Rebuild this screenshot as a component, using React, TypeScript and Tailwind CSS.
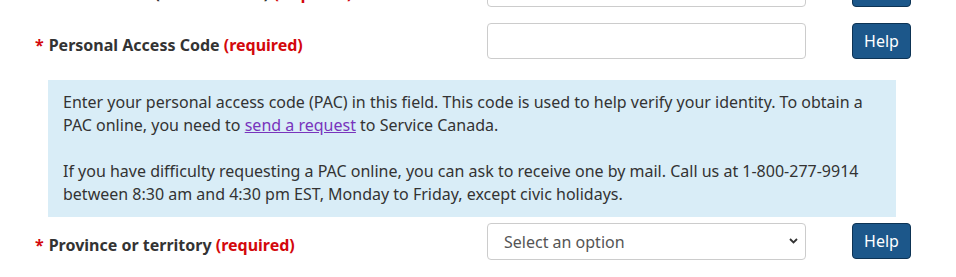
import { useState } from "react";

const FONT = { fontFamily: '"Noto Sans", "Open Sans", sans-serif' };

function Label({ text }: { text: string }) {
  return (
    <div className="w-[487px] shrink-0 pl-[35px] pt-[10px]">
      <label className="text-[16px] leading-[23px] font-bold text-[#333]">
        <span className="text-[#d3080c] mr-[5px]">*</span>
        {text} <span className="text-[#d3080c]">(required)</span>
      </label>
    </div>
  );
}

function HelpButton() {
  return (
    <button className="ml-[46px] w-[59px] h-[36px] shrink-0 rounded-[4px] bg-[#1c578a] border border-[#0d3354] text-white text-[16px] leading-none">
      Help
    </button>
  );
}

export default function App() {
  const [pac, setPac] = useState("");
  const [dob, setDob] = useState("");
  const [province, setProvince] = useState("");

  return (
    <div className="w-[956px] h-[277px] overflow-hidden bg-white" style={FONT}>
      <div className="-mt-[29px]">
        {/* Date of birth (cut off at top) */}
        <div className="flex items-start">
          <Label text="Date of birth (YYYY-MM-DD)" />
          <input
            value={dob}
            onChange={(e) => setDob(e.target.value)}
            className="w-[319px] h-[36px] shrink-0 rounded-[4px] border border-[#ccc] bg-white px-3 text-[16px] text-[#555]"
          />
          <HelpButton />
        </div>

        {/* Personal Access Code */}
        <div className="flex items-start mt-[16px]">
          <Label text="Personal Access Code" />
          <input
            value={pac}
            onChange={(e) => setPac(e.target.value)}
            className="w-[319px] h-[36px] shrink-0 rounded-[4px] border border-[#ccc] bg-white px-3 text-[16px] text-[#555]"
          />
          <HelpButton />
        </div>

        {/* Help text */}
        <div className="ml-[48px] mt-[21px] w-[848px] bg-[#d9edf7] px-[15px] py-[11px] text-[16px] leading-[23px] text-[#333]">
          <p>
            Enter your personal access code (PAC) in this field. This code is used to help verify your identity. To obtain a
            PAC online, you need to{" "}
            <a href="#" className="text-[#7834bc] underline">
              send a request
            </a>{" "}
            to Service Canada.
          </p>
          <p className="mt-[23px]">
            If you have difficulty requesting a PAC online, you can ask to receive one by mail. Call us at 1-800-277-9914
            between 8:30 am and 4:30 pm EST, Monday to Friday, except civic holidays.
          </p>
        </div>

        {/* Province or territory */}
        <div className="flex items-start mt-[6px]">
          <Label text="Province or territory" />
          <div className="relative w-[319px] h-[37px] shrink-0">
            <select
              value={province}
              onChange={(e) => setProvince(e.target.value)}
              className="appearance-none w-full h-full rounded-[4px] border border-[#ccc] bg-white pl-[16px] pr-8 text-[16px] text-[#555]"
            >
              <option value="">Select an option</option>
              <option value="AB">Alberta</option>
              <option value="BC">British Columbia</option>
              <option value="ON">Ontario</option>
            </select>
            <svg
              className="pointer-events-none absolute right-[8px] top-[15px] w-[9px] h-[6px]"
              viewBox="0 0 9 6"
              fill="none"
              stroke="#333"
              strokeWidth="1.8"
            >
              <path d="M1 1l3.5 3.5L8 1" />
            </svg>
          </div>
          <HelpButton />
        </div>
      </div>
    </div>
  );
}
